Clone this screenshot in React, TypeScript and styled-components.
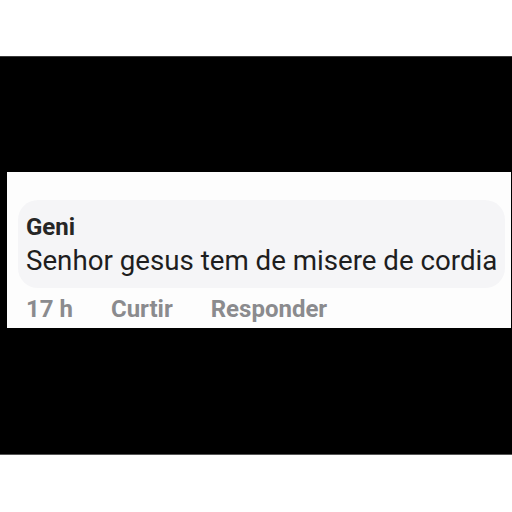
import React from "react";
import styled, { createGlobalStyle } from "styled-components";

const Global = createGlobalStyle`
  html, body { margin: 0; padding: 0; background: #ffffff; }
  body { font-family: Roboto, "Liberation Sans", Arial, sans-serif; }
`;

const Page = styled.div`
  width: 512px;
  height: 512px;
  background: #ffffff;
  padding-top: 56px;
  box-sizing: border-box;
`;

const Band = styled.div`
  height: 399px;
  background: #000000;
  padding: 115px 1px 0 7px;
  box-sizing: border-box;
  border-top: 1px solid #3a3a3a;
  border-bottom: 1px solid #555;
`;

const Card = styled.div`
  height: 156px;
  background: #fdfdfd;
  display: flex;
  flex-direction: column;
  padding: 28px 6px 0 11px;
  box-sizing: border-box;
`;

const Bubble = styled.div`
  background: #f5f5f7;
  border-radius: 20px;
  padding: 13px 8px 0 8px;
  height: 88px;
  box-sizing: border-box;
  display: flex;
  flex-direction: column;
`;

const Name = styled.div`
  font-size: 24px;
  font-weight: 700;
  color: #262626;
  line-height: 28px;
`;

const Message = styled.div`
  font-size: 27.7px;
  font-weight: 400;
  color: #1e1e1e;
  line-height: 32px;
  margin-top: 4px;
  white-space: nowrap;
`;

const Meta = styled.div`
  display: flex;
  align-items: baseline;
  padding-left: 8px;
  margin-top: 7px;
`;

const MetaItem = styled.span<{ $gap: number }>`
  font-size: 24px;
  font-weight: 700;
  color: #8b8b8e;
  line-height: 28px;
  margin-right: ${(p) => p.$gap}px;
`;

export default function App() {
  return (
    <>
      <Global />
      <Page>
        <Band>
          <Card>
            <Bubble>
              <Name>Geni</Name>
              <Message>Senhor gesus tem de misere de cordia</Message>
            </Bubble>
            <Meta>
              <MetaItem $gap={38}>17 h</MetaItem>
              <MetaItem $gap={38}>Curtir</MetaItem>
              <MetaItem $gap={0}>Responder</MetaItem>
            </Meta>
          </Card>
        </Band>
      </Page>
    </>
  );
}
